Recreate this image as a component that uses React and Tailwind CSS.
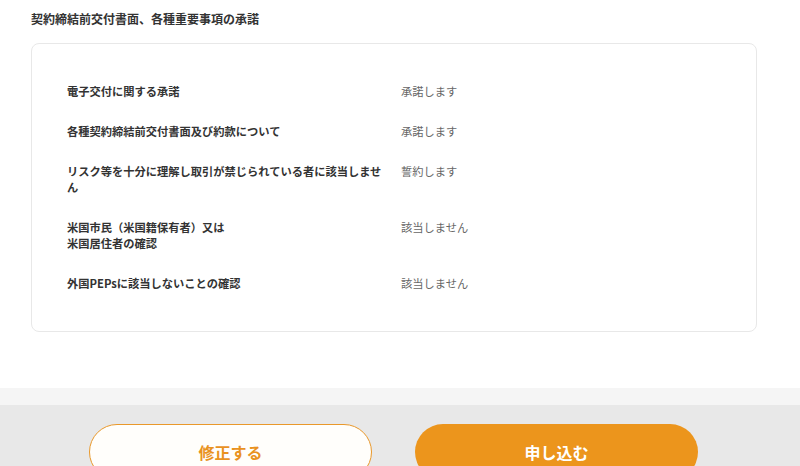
import React from 'react';

const rows = [
  { label: ['電子交付に関する承諾'], value: '承諾します' },
  { label: ['各種契約締結前交付書面及び約款について'], value: '承諾します' },
  { label: ['リスク等を十分に理解し取引が禁じられている者に該当しません'], value: '誓約します' },
  { label: ['米国市民（米国籍保有者）又は', '米国居住者の確認'], value: '該当しません' },
  { label: ['外国PEPsに該当しないことの確認'], value: '該当しません' },
];

const App = () => {
  return (
    <div
      className="w-[800px] h-[466px] overflow-hidden bg-white"
      style={{ fontFamily: '"Noto Sans CJK JP", "Noto Sans", sans-serif' }}
    >
      <section className="h-[388px] bg-white pl-[31px] pt-[11px]">
        <h2 className="text-[12px] leading-[16px] font-bold text-[#333]">
          契約締結前交付書面、各種重要事項の承諾
        </h2>
        <div className="mt-[16px] w-[726px] rounded-[8px] border border-[#e8e8e8] pt-[39px] pb-[40px] pl-[35px]">
          <dl className="flex flex-col gap-[24px]">
            {rows.map((row, i) => (
              <div key={i} className="flex gap-[16px] text-[11.25px] leading-[16px]">
                <dt className="w-[318px] font-bold text-[#333]">
                  {row.label.map((line, j) => (
                    <div key={j}>{line}</div>
                  ))}
                </dt>
                <dd className="text-[#666]">{row.value}</dd>
              </div>
            ))}
          </dl>
        </div>
      </section>

      <div className="h-[17px] bg-[#f5f5f5]" />

      <footer className="h-[61px] bg-[#e8e8e8] pt-[19px] pl-[89px] flex items-start gap-[43px]">
        <button className="w-[283px] h-[56px] shrink-0 rounded-full border-[1.5px] border-[#e9982a] bg-[#fffefb] text-[16px] leading-[20px] font-bold text-[#e9921f]">
          修正する
        </button>
        <button className="w-[283px] h-[56px] shrink-0 rounded-full bg-[#ec951c] text-[16px] leading-[20px] font-bold text-white">
          申し込む
        </button>
      </footer>
    </div>
  );
};

export default App;
